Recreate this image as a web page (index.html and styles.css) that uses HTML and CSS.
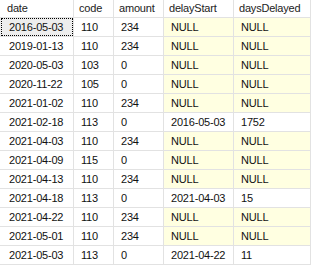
FILE: index.html
```html
<!DOCTYPE html>
<html>
<head>
<meta charset="utf-8">
<link rel="stylesheet" href="styles.css">
</head>
<body>
<div class="grid">
  <div class="h first">date</div><div class="h">code</div><div class="h">amount</div><div class="h">delayStart</div><div class="h">daysDelayed</div>

  <div class="c first sel">2016-05-03</div><div class="c">110</div><div class="c">234</div><div class="c n">NULL</div><div class="c n">NULL</div>
  <div class="c first">2019-01-13</div><div class="c">110</div><div class="c">234</div><div class="c n">NULL</div><div class="c n">NULL</div>
  <div class="c first">2020-05-03</div><div class="c">103</div><div class="c">0</div><div class="c n">NULL</div><div class="c n">NULL</div>
  <div class="c first">2020-11-22</div><div class="c">105</div><div class="c">0</div><div class="c n">NULL</div><div class="c n">NULL</div>
  <div class="c first">2021-01-02</div><div class="c">110</div><div class="c">234</div><div class="c n">NULL</div><div class="c n">NULL</div>
  <div class="c first">2021-02-18</div><div class="c">113</div><div class="c">0</div><div class="c">2016-05-03</div><div class="c">1752</div>
  <div class="c first">2021-04-03</div><div class="c">110</div><div class="c">234</div><div class="c n">NULL</div><div class="c n">NULL</div>
  <div class="c first">2021-04-09</div><div class="c">115</div><div class="c">0</div><div class="c n">NULL</div><div class="c n">NULL</div>
  <div class="c first">2021-04-13</div><div class="c">110</div><div class="c">234</div><div class="c n">NULL</div><div class="c n">NULL</div>
  <div class="c first">2021-04-18</div><div class="c">113</div><div class="c">0</div><div class="c">2021-04-03</div><div class="c">15</div>
  <div class="c first">2021-04-22</div><div class="c">110</div><div class="c">234</div><div class="c n">NULL</div><div class="c n">NULL</div>
  <div class="c first">2021-05-01</div><div class="c">110</div><div class="c">234</div><div class="c n">NULL</div><div class="c n">NULL</div>
  <div class="c first">2021-05-03</div><div class="c">113</div><div class="c">0</div><div class="c">2021-04-22</div><div class="c">11</div>
</div>
</body>
</html>
```
FILE: styles.css
```css
html, body {
  margin: 0;
  padding: 0;
  background: #ffffff;
}
.grid {
  display: grid;
  grid-template-columns: 74px 40px 50px 70px 1fr;
  grid-template-rows: 18px;
  grid-auto-rows: 19px;
  font-family: "Liberation Sans", Arial, sans-serif;
  font-size: 11px;
  letter-spacing: -0.2px;
  color: #111;
}
.h, .c {
  box-sizing: border-box;
  border-right: 1px solid #e2e2e2;
  border-bottom: 1px solid #e2e2e2;
  white-space: nowrap;
  overflow: hidden;
  position: relative;
}
.h {
  padding-left: 5px;
  line-height: 17px;
  color: #222;
  background: #ffffff;
}
.c {
  padding-left: 7px;
  line-height: 18px;
}
.h.first { padding-left: 7px; }
.c.first { padding-left: 9px; }
.n { background: #ffffe1; }
.sel { background: #ededed; }
.sel::after {
  content: "";
  position: absolute;
  top: 0;
  left: 1px;
  right: 0;
  bottom: 0;
  border: 1px dotted #000;
}
```
